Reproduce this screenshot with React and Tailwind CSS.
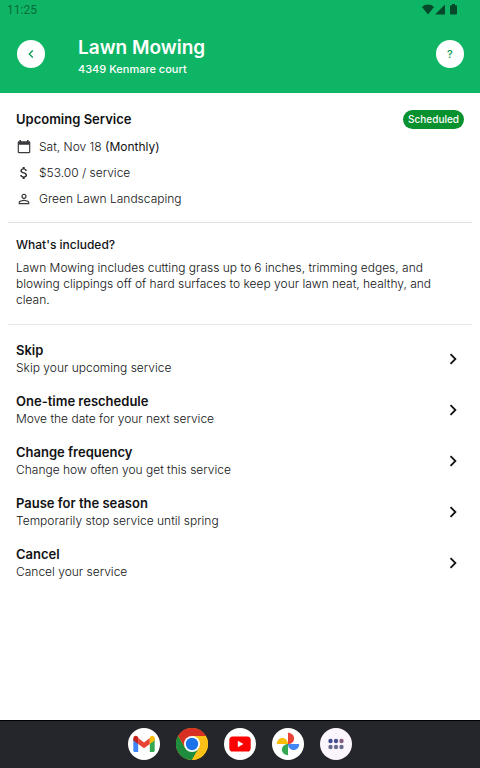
import React from "react";
import {
  MdChevronLeft,
  MdChevronRight,
  MdAttachMoney,
  MdPersonOutline,
} from "react-icons/md";

const actions = [
  { title: "Skip", text: "Skip your upcoming service" },
  { title: "One-time reschedule", text: "Move the date for your next service" },
  { title: "Change frequency", text: "Change how often you get this service" },
  { title: "Pause for the season", text: "Temporarily stop service until spring" },
  { title: "Cancel", text: "Cancel your service" },
];

function CalendarIcon() {
  return (
    <svg className="size-4" viewBox="0 0 16 16" fill="#3a3b3e" aria-hidden="true">
      <path
        fillRule="evenodd"
        d="M3.500 1h1.500v1.300h6V1h1.500v1.300h.6c.7 0 1.200.5 1.200 1.200v9.600c0 .7-.5 1.200-1.200 1.200H2.900c-.7 0-1.200-.5-1.200-1.200V3.500c0-.7.5-1.200 1.200-1.200h.6V1Zm-.6 4.800v7.300h10.200V5.800H2.900Z"
      />
    </svg>
  );
}

function StatusBar() {
  return (
    <div className="flex h-[19px] items-center justify-between pr-[22px] pl-[7px]">
      <span className="font-[Roboto,sans-serif] text-xs leading-4 text-[#086b3a]">11:25</span>
      <svg className="h-[11px] w-9" viewBox="0 0 36 11" fill="#05492a" aria-hidden="true">
        <path d="M0 3C3.400-.300 8.600-.300 12 3L6 10.400Z" />
        <path d="M23 .5V10.400H13.100Z" />
        <path d="M30 1.200V0h3v1.200h1c.6 0 1 .4 1 1v7.300c0 .6-.4 1-1 1h-5c-.6 0-1-.4-1-1V2.200c0-.6.4-1 1-1Z" />
      </svg>
    </div>
  );
}

function GmailIcon() {
  return (
    <svg className="size-8" viewBox="0 0 32 32" aria-hidden="true">
      <circle cx="16" cy="16" r="16" fill="#fff" />
      <path d="M5.300 11v11.400c0 .8.700 1.500 1.500 1.500h3.400V14.500Z" fill="#4285f4" />
      <path d="M26.700 11v11.400c0 .8-.7 1.500-1.500 1.500h-3.400V14.500Z" fill="#34a853" />
      <path d="M10.200 10.100V16L16 20.300 21.800 16v-5.900L16 14.400Z" fill="#ea4335" />
      <path d="M5.300 10.400c0-2.300 2.400-3.200 4-2l.9.700V16l-4.900-3.600Z" fill="#c5221f" />
      <path d="M26.700 10.400c0-2.300-2.400-3.200-4-2l-.9.700V16l4.900-3.600Z" fill="#fbbc04" />
    </svg>
  );
}

function ChromeIcon() {
  return (
    <svg className="size-8" viewBox="0 0 32 32" aria-hidden="true">
      <circle cx="16" cy="16" r="16" fill="#fbc116" />
      <path d="M2.140 8A16 16 0 0 1 29.860 8H16l-6.930 12Z" fill="#d93025" />
      <path d="M2.140 8A16 16 0 0 0 16 32l6.930-12H9.070Z" fill="#1e8e3e" />
      <path d="M16 8h13.860A16 16 0 0 1 16 32l6.930-12Z" fill="#fbc116" />
      <circle cx="16" cy="16" r="8" fill="#fff" />
      <circle cx="16" cy="16" r="6.200" fill="#1a73e8" />
    </svg>
  );
}

function YouTubeIcon() {
  return (
    <svg className="size-8" viewBox="0 0 32 32" aria-hidden="true">
      <circle cx="16" cy="16" r="16" fill="#fff" />
      <rect x="5.300" y="8.500" width="21.400" height="15" rx="3.600" fill="#f00" />
      <path d="M13.800 12.700v6.600l5.600-3.300Z" fill="#fff" />
    </svg>
  );
}

function PhotosIcon() {
  return (
    <svg className="size-8" viewBox="0 0 32 32" aria-hidden="true">
      <circle cx="16" cy="16" r="16" fill="#fff" />
      <path d="M16 4.800c3.400 0 6.100 2.500 6.100 5.600S19.400 16 16 16Z" fill="#ea4335" />
      <path d="M27.200 16c0 3.400-2.500 6.100-5.600 6.100S16 19.400 16 16Z" fill="#4285f4" />
      <path d="M16 27.200c-3.400 0-6.100-2.500-6.100-5.600S12.600 16 16 16Z" fill="#34a853" />
      <path d="M4.800 16c0-3.400 2.500-6.100 5.600-6.100S16 12.600 16 16Z" fill="#fbbc04" />
    </svg>
  );
}

function AppsIcon() {
  return (
    <svg className="size-8" viewBox="0 0 32 32" aria-hidden="true">
      <circle cx="16" cy="16" r="16" fill="#fcf5fd" />
      <circle cx="10.500" cy="13" r="2.200" fill="#3d4b8f" />
      <circle cx="16" cy="13" r="2.200" fill="#46508c" />
      <circle cx="21.500" cy="13" r="2.200" fill="#84607f" />
      <circle cx="10.500" cy="19" r="2.200" fill="#666c8c" />
      <circle cx="16" cy="19" r="2.200" fill="#666c8c" />
      <circle cx="21.500" cy="19" r="2.200" fill="#666c8c" />
    </svg>
  );
}

const dock = [
  { name: "Gmail", Icon: GmailIcon },
  { name: "Chrome", Icon: ChromeIcon },
  { name: "YouTube", Icon: YouTubeIcon },
  { name: "Photos", Icon: PhotosIcon },
  { name: "All apps", Icon: AppsIcon },
];

export default function App() {
  return (
    <div className="flex min-h-screen flex-col bg-white font-[Inter,sans-serif] text-[#111214]">
      <header className="bg-[#0eb564] pb-[15px] text-white">
        <StatusBar />
        <div className="flex items-start px-4 pt-[17px] pl-[17px]">
          <button
            type="button"
            aria-label="Back"
            className="mt-1 flex size-[28px] shrink-0 items-center justify-center rounded-full bg-white text-[#0a9a50]"
          >
            <MdChevronLeft className="size-4" />
          </button>
          <div className="ml-[33px] flex-1">
            <h1 className="text-[19px] leading-6 font-semibold">Lawn Mowing</h1>
            <p className="text-[11px] leading-[18px] font-medium">4349 Kenmare court</p>
          </div>
          <button
            type="button"
            aria-label="Help"
            className="mt-1 flex size-[28px] shrink-0 items-center justify-center rounded-full bg-white text-[11px] font-medium text-[#0a9a50]"
          >
            ?
          </button>
        </div>
      </header>

      <main className="flex-1 px-2">
        <section className="border-b border-[#e2e2e2] px-2 pt-4 pb-[14px]">
          <div className="flex items-center justify-between">
            <h2 className="text-[13px] leading-5 font-semibold">Upcoming Service</h2>
            <span className="rounded-full bg-[#07912f] px-[5px] text-[10px] leading-[19px] font-medium text-white">
              Scheduled
            </span>
          </div>
          <ul className="mt-[9px] flex flex-col gap-2 text-xs leading-[18px] font-light">
            <li className="flex items-center gap-[7px]">
              <CalendarIcon />
              <span>
                Sat, Nov 18 <span className="font-normal">(Monthly)</span>
              </span>
            </li>
            <li className="flex items-center gap-[7px]">
              <MdAttachMoney className="size-4 text-[#2a2b2e]" />
              <span>$53.00 / service</span>
            </li>
            <li className="flex items-center gap-[7px]">
              <MdPersonOutline className="size-4 text-[#3a3b3e]" />
              <span>Green Lawn Landscaping</span>
            </li>
          </ul>
        </section>

        <section className="border-b border-[#e8e8e8] px-2 pt-3 pb-4">
          <h3 className="text-xs leading-5 font-medium">What's included?</h3>
          <p className="mt-[5px] text-xs leading-4 font-light">
            Lawn Mowing includes cutting grass up to 6 inches, trimming edges, and blowing clippings
            off of hard surfaces to keep your lawn neat, healthy, and clean.
          </p>
        </section>

        <ul className="flex flex-col gap-4 px-2 pt-4">
          {actions.map((action) => (
            <li key={action.title}>
              <button type="button" className="flex w-full items-center justify-between text-left">
                <span className="flex flex-col">
                  <span className="text-[13px] leading-[18px] font-semibold">{action.title}</span>
                  <span className="text-xs leading-[17px] font-light">{action.text}</span>
                </span>
                <MdChevronRight className="size-[22px]" />
              </button>
            </li>
          ))}
        </ul>
      </main>

      <nav
        aria-label="Dock"
        className="flex items-center justify-center gap-4 border-t border-black bg-[#25262c] pt-[7px] pb-2"
      >
        {dock.map(({ name, Icon }) => (
          <button key={name} type="button" aria-label={name} className="rounded-full">
            <Icon />
          </button>
        ))}
      </nav>
    </div>
  );
}
